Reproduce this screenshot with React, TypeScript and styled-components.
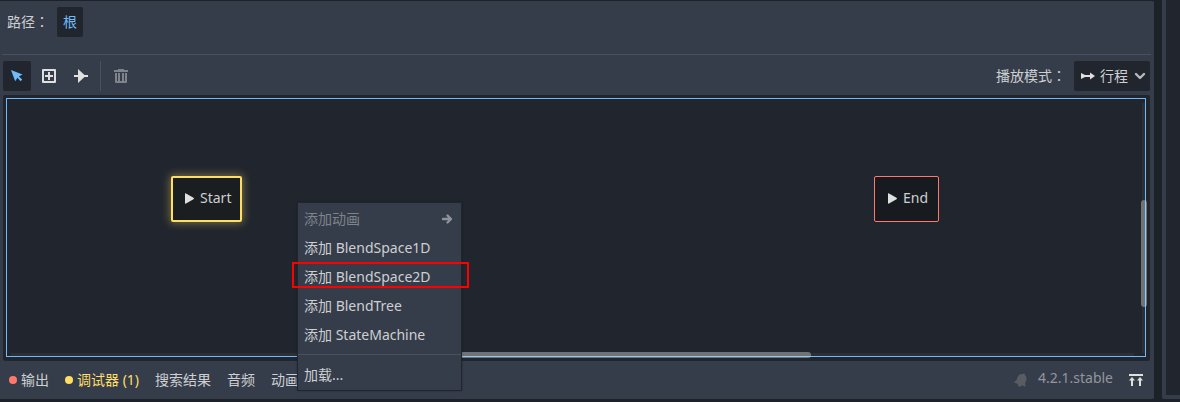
import React from 'react';
import styled, { createGlobalStyle, css } from 'styled-components';

const color = {
  base: '#1d2229',
  panel: '#363d4a',
  sunken: '#21262e',
  line: '#4b515c',
  text: '#cdcfd2',
  icon: '#e0e0e0',
  muted: '#7f848c',
  accent: '#70bafa',
  error: '#ff786b',
  warning: '#ffde66',
};

const GlobalStyle = createGlobalStyle`
  * { box-sizing: border-box; }
  body {
    margin: 0;
    background: ${color.base};
    color: ${color.text};
    font: 14px/20px "Noto Sans", "Noto Sans CJK SC", sans-serif;
    overflow: hidden;
  }
  button, select { font: inherit; color: inherit; border: 0; margin: 0; padding: 0; background: none; }
  svg { display: block; flex: none; }
`;

const Screen = styled.div`
  display: flex;
  gap: 8px;
  height: 100vh;
  padding: 1px 0 3px;
`;

const Dock = styled.main`
  flex: 1;
  min-width: 0;
  display: flex;
  flex-direction: column;
  background: ${color.panel};
  border-radius: 0 2px 2px 0;
`;

const SideDock = styled.aside`
  width: 18px;
  margin-top: -1px;
  border: solid ${color.panel};
  border-width: 0 0 4px 4px;
  border-radius: 0 0 0 2px;
  background: ${color.sunken};
`;

const PathRow = styled.header`
  display: flex;
  align-items: flex-start;
  height: 54px;
  margin: 0 3px 0 2px;
  padding: 6px 5px;
  gap: 8px;
  border-bottom: 1px solid ${color.line};
`;

const Label = styled.label`
  line-height: 30px;
`;

const Colon = styled.span`
  font-family: "Noto Sans CJK TC", sans-serif;
  line-height: 1;
`;

const RootButton = styled.button`
  height: 30px;
  padding: 0 6px;
  border-radius: 2px;
  background: ${color.sunken};
  color: ${color.accent};
`;

const Toolbar = styled.div`
  display: flex;
  align-items: center;
  gap: 4px;
  margin: 6px 4px 4px 3px;
  height: 30px;
`;

const ToolButton = styled.button<{ $active?: boolean }>`
  display: grid;
  place-items: center;
  width: 28px;
  height: 30px;
  border-radius: 2px;
  ${(p) => p.$active && css`background: ${color.sunken};`}
`;

const Divider = styled.span`
  width: 1px;
  height: 30px;
  margin: 0 2px 0 1px;
  background: ${color.line};
`;

const Spacer = styled.span`
  flex: 1;
`;

const ModeField = styled.div`
  position: relative;
  margin-left: 4px;
  color: ${color.icon};
  svg { position: absolute; top: 7px; pointer-events: none; }
  svg:first-child { left: 6px; }
  svg:last-child { right: 2px; }
`;

const ModeSelect = styled.select`
  appearance: none;
  display: block;
  width: 76px;
  height: 30px;
  padding: 0 20px 0 26px;
  border-radius: 2px;
  background: ${color.sunken};
  color: ${color.text};
`;

const GraphFrame = styled.section`
  flex: 1;
  display: flex;
  min-height: 0;
  margin: 0 4px 0 3px;
  padding: 3px 4px 4px 3px;
  border-radius: 2px;
  background: ${color.sunken};
`;

const Canvas = styled.div`
  position: relative;
  flex: 1;
  border: 1px solid ${color.accent};
`;

const Node = styled.div<{ $kind: 'start' | 'end' }>`
  position: absolute;
  display: flex;
  align-items: center;
  height: 46px;
  gap: 3px;
  padding: 0 9px 3px 8px;
  border-radius: 2px;
  background: #1a1e21;
  ${(p) =>
    p.$kind === 'start'
      ? css`
          left: 164px;
          top: 77px;
          border: 2px solid ${color.warning};
          box-shadow: 0 0 8px 1px rgba(255, 222, 102, 0.4);
        `
      : css`
          left: 867px;
          top: 77px;
          padding: 0 10px 3px 9px;
          border: 1px solid ${color.error};
          background: #171b1f;
        `}
`;

const Track = styled.div<{ $axis: 'x' | 'y' }>`
  position: absolute;
  background: #2b3037;
  ${(p) =>
    p.$axis === 'x'
      ? css`left: 4px; right: 11px; bottom: 0; height: 3px;`
      : css`top: 4px; bottom: 3px; right: 0; width: 3px;`}
`;

const Thumb = styled.div<{ $axis: 'x' | 'y' }>`
  position: absolute;
  border-radius: 3px;
  background: #6f7277;
  ${(p) =>
    p.$axis === 'x'
      ? css`left: 330px; width: 474px; bottom: -2px; height: 6px;`
      : css`top: 101px; height: 107px; right: -2px; width: 6px;`}
  &::after {
    content: "";
    position: absolute;
    background: #92c8f5;
    ${(p) =>
      p.$axis === 'x'
        ? css`left: 0; right: 0; bottom: 1px; height: 1px;`
        : css`top: 0; bottom: 0; right: 1px; width: 1px;`}
  }
`;

const Menu = styled.div`
  position: absolute;
  z-index: 1;
  left: 290px;
  top: 103px;
  width: 165px;
  padding: 1px 0;
  border: 1px solid ${color.sunken};
  background: ${color.panel};
  box-shadow: 0 0 2px rgba(0, 0, 0, 0.3);
`;

const MenuItem = styled.button`
  display: flex;
  align-items: center;
  justify-content: space-between;
  width: 100%;
  height: 29px;
  padding: 0 6px;
  white-space: nowrap;
  &:disabled { color: ${color.muted}; }
`;

const MenuRule = styled.hr`
  height: 1px;
  margin: 5px 0;
  border: 0;
  background: ${color.line};
`;

const Highlight = styled.div`
  position: absolute;
  z-index: 2;
  left: 285px;
  top: 163px;
  width: 177px;
  height: 26px;
  border: 2px solid #ff0000;
`;

const BottomBar = styled.footer`
  display: flex;
  align-items: center;
  height: 38px;
  padding: 0 4px 0 9px;
  gap: 16px;
`;

const BottomTab = styled.button<{ $tone?: string }>`
  display: flex;
  align-items: center;
  gap: 4px;
  white-space: nowrap;
  ${(p) => p.$tone && css`color: ${p.$tone};`}
`;

const Dot = styled.span<{ $tone: string }>`
  width: 8px;
  height: 8px;
  border-radius: 50%;
  background: ${(p) => p.$tone};
`;

const Status = styled.div`
  display: flex;
  align-items: center;
  gap: 9px;
`;

const Version = styled.a`
  padding-bottom: 4px;
  color: #92969e;
  text-decoration: none;
`;

type IconProps = { children: React.ReactNode; fill?: string };
const Icon = ({ children, fill = color.icon }: IconProps) => (
  <svg width="16" height="16" viewBox="0 0 16 16" fill={fill} aria-hidden="true">
    {children}
  </svg>
);

const PlayIcon = () => (
  <Icon>
    <path d="M4 13.100a.6.6 0 0 0 1 .5l7.500-4.300a1 1 0 0 0 0-1.600L5 3.400a.6.6 0 0 0-1 .5z" />
  </Icon>
);

export default function App() {
  return (
    <>
      <GlobalStyle />
      <Screen>
        <Dock>
          <PathRow>
            <Label as="span">路径<Colon>：</Colon></Label>
            <RootButton>根</RootButton>
          </PathRow>

          <Toolbar role="toolbar" aria-label="状态机">
            <ToolButton $active aria-label="选择">
              <Icon fill={color.accent}>
                <path d="M2 2l4.200 11.200 2.200-3.400 3.200 3.400 1.600-1.600-3.300-3.200 3.600-2z" />
              </Icon>
            </ToolButton>
            <ToolButton aria-label="新建">
              <Icon>
                <path fillRule="evenodd" d="M2 1a1 1 0 0 0-1 1v12a1 1 0 0 0 1 1h12a1 1 0 0 0 1-1V2a1 1 0 0 0-1-1zm1 2h10v10H3zm4 1v3H4v2h3v3h2V9h3V7H9V4z" />
              </Icon>
            </ToolButton>
            <ToolButton aria-label="连接">
              <Icon>
                <path d="M5 1v6H1v2h4v6l6.500-6H15V7h-3.500z" />
              </Icon>
            </ToolButton>
            <Divider />
            <ToolButton aria-label="删除" disabled>
              <Icon fill={color.muted}>
                <path d="M5 1v1H1v2h14V2h-4V1zM2 5v9a1 1 0 0 0 1 1h10a1 1 0 0 0 1-1V5h-2v8h-1V5H9v8H7V5H5v8H4V5z" />
              </Icon>
            </ToolButton>
            <Spacer />
            <Label htmlFor="mode">播放模式<Colon>：</Colon></Label>
            <ModeField>
              <Icon>
                <path d="M1 5v6l4-2h5v2.500L15 8l-5-3.500V7H5z" />
              </Icon>
              <ModeSelect id="mode" defaultValue="travel">
                <option value="travel">行程</option>
              </ModeSelect>
              <Icon fill="none">
                <path d="M4 6l4 4 4-4" stroke="#b6b9bd" strokeWidth="2.4" strokeLinecap="round" strokeLinejoin="round" />
              </Icon>
            </ModeField>
          </Toolbar>

          <GraphFrame>
            <Canvas>
              <Track $axis="x" />
              <Track $axis="y" />
              <Thumb $axis="x" />
              <Thumb $axis="y" />
              <Node $kind="start"><PlayIcon />Start</Node>
              <Node $kind="end"><PlayIcon />End</Node>
              <Menu role="menu">
                <MenuItem role="menuitem" disabled>
                  添加动画
                  <Icon fill="none">
                    <path d="M4 8H12M8.500 4.500L12 8l-3.500 3.500" stroke="#8e9299" strokeWidth="2.4" strokeLinecap="round" strokeLinejoin="round" />
                  </Icon>
                </MenuItem>
                <MenuItem role="menuitem">添加 BlendSpace1D</MenuItem>
                <MenuItem role="menuitem">添加 BlendSpace2D</MenuItem>
                <MenuItem role="menuitem">添加 BlendTree</MenuItem>
                <MenuItem role="menuitem">添加 StateMachine</MenuItem>
                <MenuRule />
                <MenuItem role="menuitem">加载...</MenuItem>
              </Menu>
              <Highlight />
            </Canvas>
          </GraphFrame>

          <BottomBar>
            <BottomTab><Dot $tone={color.error} />输出</BottomTab>
            <BottomTab $tone={color.warning}><Dot $tone={color.warning} />调试器 (1)</BottomTab>
            <BottomTab>搜索结果</BottomTab>
            <BottomTab>音频</BottomTab>
            <BottomTab>动画</BottomTab>
            <Spacer />
            <Status>
              <Icon fill="#585c63">
                <path d="M11.300 1.500a1.200 1.200 0 0 0-1.400.6C7.500 1.700 5.300 3 4.500 5.300L3.700 7.500C3.300 8.600 2.500 9 1.700 9.300c-.7.300-.6 1.100 0 1.400l3.200 1.200a2 2 0 0 0 3.800 1.400l2.800 1c.8.300 1.300-.3 1-1-.4-.9-.6-1.600-.2-2.600l.9-2.300c.8-2.200.1-4.300-1.400-5.500a1.100 1.100 0 0 0-.5-1.400z" />
              </Icon>
              <Version href="#version">4.2.1.stable</Version>
              <ToolButton aria-label="展开底部面板">
                <Icon>
                  <path d="M1 2h14v2H1zM4 5L1 8.500h2V14h2V8.500h2zM12 5L9 8.500h2V14h2V8.500h2z" />
                </Icon>
              </ToolButton>
            </Status>
          </BottomBar>
        </Dock>
        <SideDock />
      </Screen>
    </>
  );
}
